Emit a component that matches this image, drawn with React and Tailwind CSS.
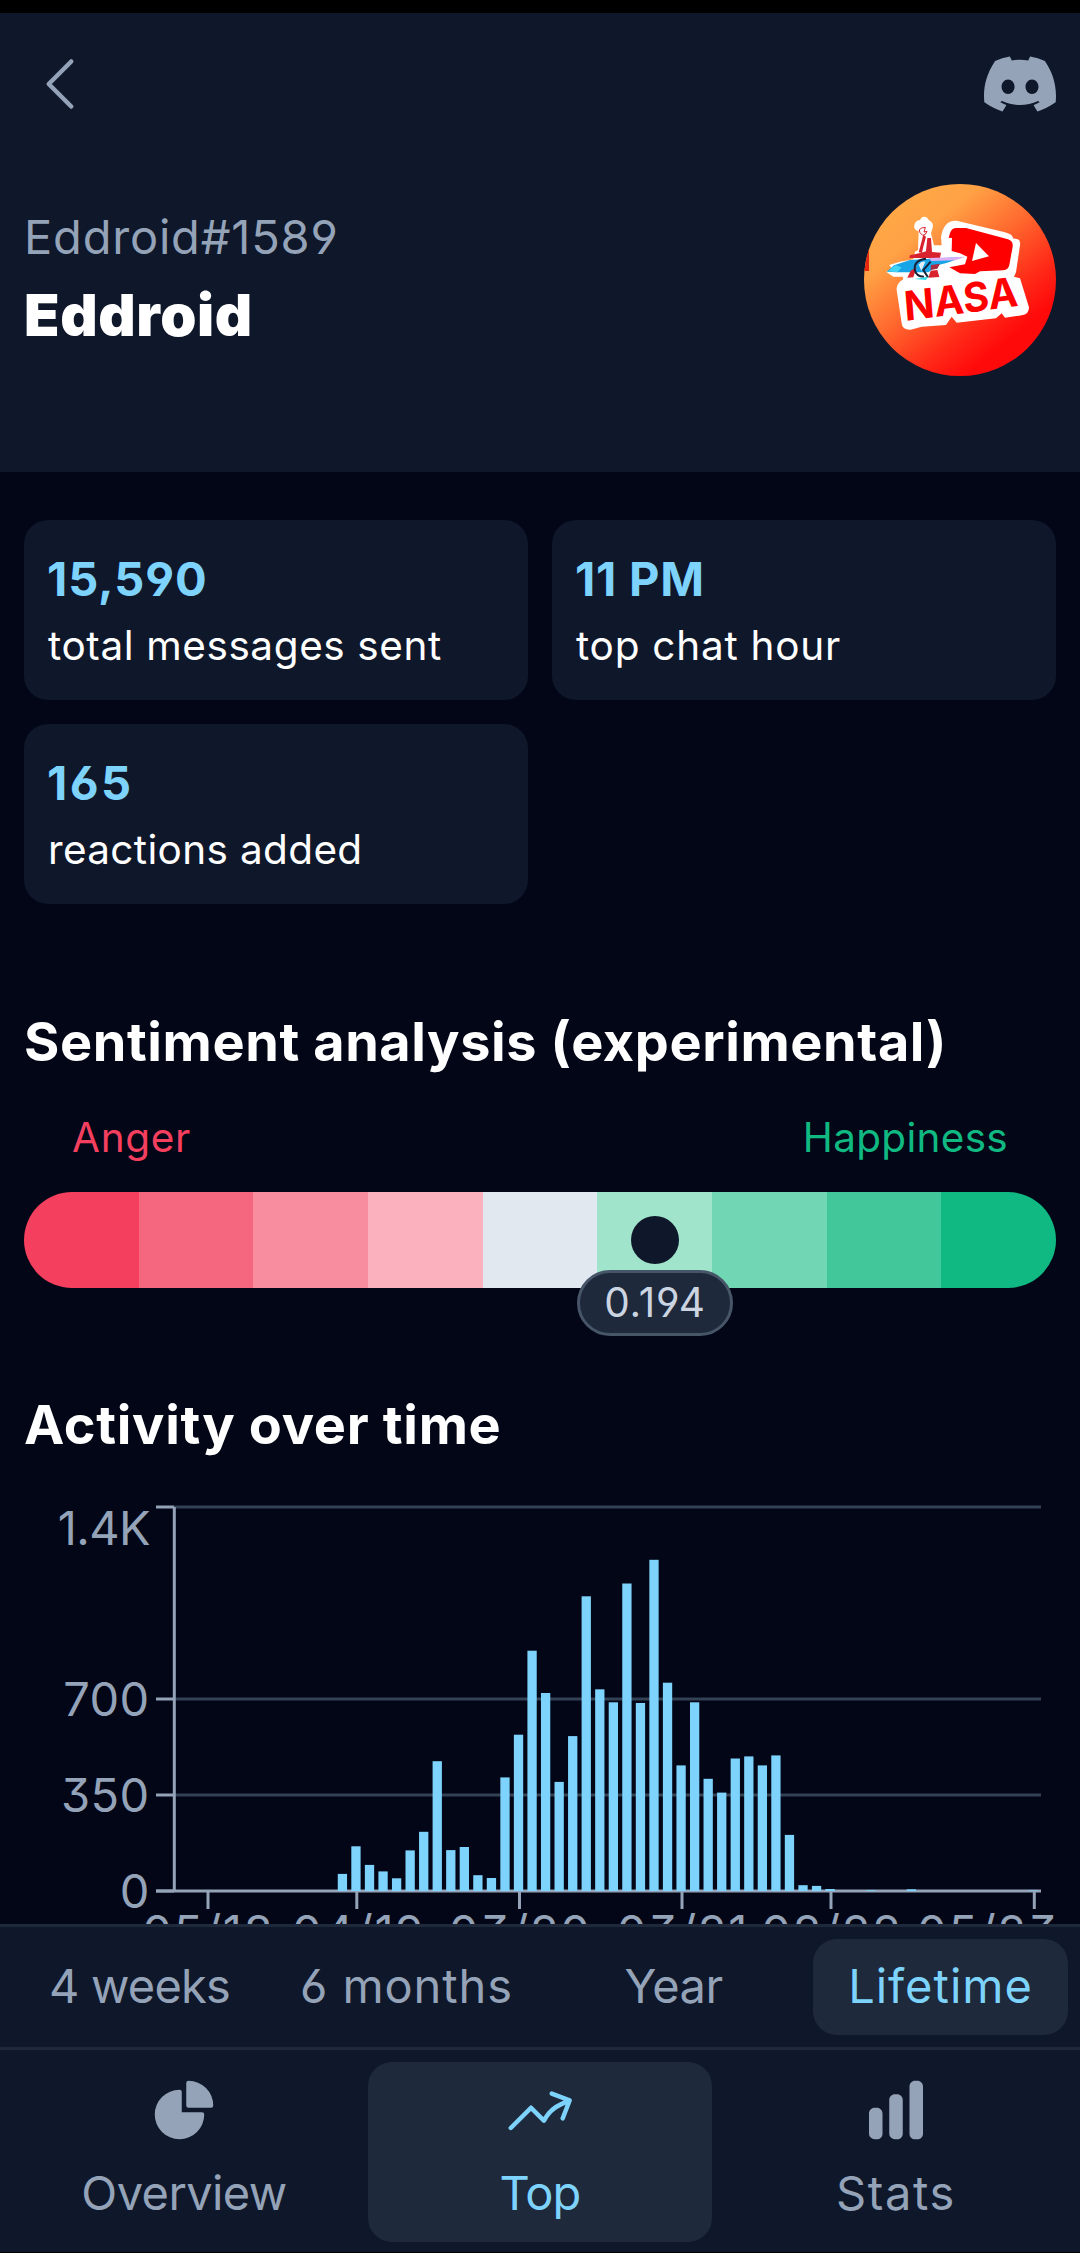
import React from "react";
import { SiDiscord } from "react-icons/si";
import {
  HiOutlineChevronLeft,
  HiChartPie,
  HiArrowTrendingUp,
  HiChartBar,
} from "react-icons/hi2";

const CARDS = [
  { value: "15,590", label: "total messages sent", v: "tracking-[0.9px]", l: "tracking-[0.6px]" },
  { value: "11 PM", label: "top chat hour", v: "tracking-[0.8px]", l: "tracking-[0.75px]" },
  { value: "165", label: "reactions added", v: "tracking-[2.4px]", l: "tracking-[0.35px]" },
];

const SEGMENTS = [
  "bg-[#f43f5e]",
  "bg-[#f5677f]",
  "bg-[#f98da0]",
  "bg-[#fbb2be]",
  "bg-[#e2e8f0]",
  "bg-[#a0e4cc]",
  "bg-[#70d6b3]",
  "bg-[#41c79a]",
  "bg-[#10b981]",
];

// Top edge of each monthly bar, keyed by its slot on the 64-month axis.
const FIRST_SLOT = 12;
const BASE = 1891;
const BAR_TOPS = [
  1873.9, 1846.3, 1864.9, 1871.4, 1878.3, 1850.4, 1831.8, 1761.2, 1850.1, 1847,
  1875.2, 1878, 1777.4, 1734.7, 1650.7, 1693, 1781.9, 1736.1, 1596.3, 1689.3,
  1702.3, 1583.5, 1703, 1559.8, 1682.7, 1765.4, 1702.3, 1778.8, 1792.6, 1758.5,
  1756.4, 1765.4, 1755.4, 1834.9, 1885.2, 1885.9, 1889, BASE, BASE, 1890.2, BASE,
  BASE, 1889.3, BASE, BASE, BASE, BASE, BASE, BASE, BASE, BASE, 1890.4,
];
const SLOT = 13.547;

const Y_LABELS = [
  { text: "1.4K", x: 150, y: 1545, tick: 1507, s: "tracking-[-0.6px]" },
  { text: "700", x: 149.5, y: 1715.7, tick: 1699, s: "tracking-[0.4px]" },
  { text: "350", x: 149.5, y: 1811.7, tick: 1795, s: "tracking-[0.4px]" },
  { text: "0", x: 149.5, y: 1907.7, tick: 1891, s: "tracking-normal" },
];

const X_LABELS = [
  { text: "05/18", x: 208.5, tick: 208 },
  { text: "04/19", x: 358.3, tick: 356.8 },
  { text: "03/20", x: 520.3, tick: 519.5 },
  { text: "03/21", x: 683, tick: 682 },
  { text: "02/22", x: 832, tick: 831 },
  { text: "05/23", x: 988, tick: 1034.3 },
];

const RANGES = [
  { text: "4 weeks", s: "tracking-[-0.8px]" },
  { text: "6 months", s: "tracking-[0.9px]" },
  { text: "Year", s: "tracking-[-0.5px]" },
  { text: "Lifetime", s: "tracking-[1px]", active: true },
];

const TABS = [
  { text: "Overview", s: "tracking-[-0.6px]", Icon: HiChartPie },
  { text: "Top", s: "tracking-[-0.9px]", Icon: HiArrowTrendingUp, active: true },
  { text: "Stats", s: "tracking-[1.6px]", Icon: HiChartBar },
];

function Avatar() {
  return (
    <svg className="size-48 rounded-full" viewBox="12 12 576 576">
      <defs>
        <linearGradient id="sky" x1="0.15" y1="0.14" x2="0.72" y2="0.84">
          <stop offset="0" stopColor="#ffa747" />
          <stop offset="0.2" stopColor="#ffa245" />
          <stop offset="0.5" stopColor="#ff6a2e" />
          <stop offset="0.8" stopColor="#ff2a18" />
          <stop offset="1" stopColor="#ff0a0a" />
        </linearGradient>
      </defs>
      <rect x="12" y="12" width="576" height="576" fill="url(#sky)" />
      <rect x="12" y="210" width="15" height="63" fill="#e8260f" />
      <g fill="#fff">
        <path d="M176 153 Q160 150 163 135 Q166 122 180 120 Q184 110 193 110 Q203 111 206 120 Q219 126 219 139 Q216 150 213 160 L222 196 L245 196 L243 172 Q250 120 290 122 L432 156 Q462 164 458 175 L474 178 Q482 182 480 196 L468 277 L462 290 L480 295 L507 382 Q507 404 485 406 L435 413 L425 400 L408 415 L290 428 L275 410 L258 435 L185 440 L152 449 Q126 450 125 430 L110 330 Q108 310 130 298 L128 290 L100 290 L78 275 L98 270 L88 255 L120 245 L160 238 L165 215 L174 210 Z" />
      </g>
      <path d="M270 160 Q274 144 290 144 L318 144 L444 178 Q460 183 458 200 L448 255 Q445 270 430 271 L360 274 L345 282 L300 280 L268 262 L315 253 L322 230 L300 220 L275 213 L276 174 L266 173 Z" fill="#ff0000" />
      <path d="M348 189 L387 229 L336 243 Z" fill="#fff" />
      <path d="M178 150 L184 144 L196 142 L192 156 L201 154 L196 163 L188 166 L180 158 Z" fill="none" stroke="#d8232f" strokeWidth="3" />
      <path d="M190 164 L198 170 L190 200 L186 218 L176 217 Z M202 174 L213 174 L216 216 L243 218 L240 234 L148 234 L150 226 L184 218 L198 214 Z" fill="#d8232f" />
      <path d="M80 275 L102 256 L150 240 L300 231 Q285 244 238 254 L205 277 L110 277 Z" fill="#18a5e8" />
      <path d="M84 274 L106 256 L125 262 L112 277 Z" fill="#43d4f5" />
      <path d="M205 234 L318 230 L285 241 L215 243 Z" fill="#dcb0f4" />
      <path d="M152 272 L170 262 L160 292 L142 293 Z M212 272 L232 270 L238 291 L205 293 Z" fill="#d8232f" />
      <path d="M198 236 Q162 240 164 268 Q168 290 192 290 M212 245 L190 270 L204 292" fill="none" stroke="#17223a" strokeWidth="6" />
      <path d="M176 254 Q184 242 196 245 L184 272 Z" fill="#e4eef8" />
      <path d="M213 255 L240 251 L232 266 L212 270 Z" fill="#a92c40" />
      <path d="M163 297 L205 290 L198 300 Z" fill="#35d9e8" />
      <text
        x="0"
        y="0"
        transform="translate(136 423) rotate(-7.6) skewX(-3)"
        textLength="344"
        lengthAdjust="spacingAndGlyphs"
        className="fill-[#ff0000] font-['Inter',sans-serif] text-[122px] font-bold"
      >
        NASA
      </text>
    </svg>
  );
}

function ActivityChart() {
  return (
    <svg className="mt-[19px] block h-[444px] w-[1080px] shrink-0" viewBox="0 1480 1080 444">
      <g stroke="#334155" strokeWidth="3">
        <path d="M174 1507H1041M174 1699H1041M174 1795H1041" />
      </g>
      <g stroke="#94a3b8" strokeWidth="3" fill="none">
        <path d="M174.3 1507V1891M156 1891H1041" />
        {Y_LABELS.map((l) => (
          <path key={l.text} d={`M156 ${l.tick}H174`} />
        ))}
        {X_LABELS.map((l) => (
          <path key={l.text} d={`M${l.tick} 1891V1909`} />
        ))}
      </g>
      <g fill="#7dd3fc">
        {BAR_TOPS.map((top, i) => (
          <rect key={i} x={175.2 + (FIRST_SLOT + i) * SLOT} y={top} width="9.3" height={BASE - top} />
        ))}
      </g>
      <g className="fill-[#94a3b8] text-[47px]">
        {Y_LABELS.map((l) => (
          <text key={l.text} x={l.x} y={l.y} textAnchor="end" className={l.s}>
            {l.text}
          </text>
        ))}
        {X_LABELS.map((l) => (
          <text key={l.text} x={l.x} y="1949" textAnchor="middle" className="tracking-[1.8px]">
            {l.text}
          </text>
        ))}
      </g>
    </svg>
  );
}

export default function App() {
  return (
    <div className="flex h-[2253px] w-[1080px] flex-col overflow-hidden bg-[#020617] font-['Inter',sans-serif] text-white [font-feature-settings:'cv03','cv04','cv09']">
      <div className="h-[13px] shrink-0 bg-black" />

      <header className="h-[459px] shrink-0 bg-[#0f172a] px-6 pt-[35px]">
        <div className="flex items-center justify-between text-[#94a3b8]">
          <HiOutlineChevronLeft className="size-[72px]" />
          <SiDiscord className="size-[72px]" />
        </div>
        <div className="mt-16 flex justify-between">
          <div className="pt-[17px]">
            <div className="text-[47px] leading-[72px] tracking-[0.8px] text-[#94a3b8]">Eddroid#1589</div>
            <h1 className="text-[58px] leading-[84px] font-black tracking-[0.6px]">Eddroid</h1>
          </div>
          <Avatar />
        </div>
      </header>

      <main className="flex min-h-0 flex-1 flex-col overflow-hidden">
        <div className="mx-6 mt-12 grid shrink-0 grid-cols-2 gap-6">
          {CARDS.map((c) => (
            <div key={c.label} className="h-[180px] rounded-3xl bg-[#0f172a] p-6">
              <div className={`-ml-px text-[47px] leading-[70px] font-bold text-[#7dd3fc] ${c.v}`}>{c.value}</div>
              <div className={`text-[40.5px] leading-[64px] ${c.l}`}>{c.label}</div>
            </div>
          ))}
        </div>

        <h2 className="mx-6 mt-[102px] shrink-0 text-[54px] leading-[72px] font-bold tracking-[0.6px] whitespace-nowrap">
          Sentiment analysis (experimental)
        </h2>
        <div className="mx-[72px] mt-[30px] flex shrink-0 justify-between text-[40.5px] leading-[60px]">
          <span className="tracking-[0.7px] text-[#f43f5e]">Anger</span>
          <span className="tracking-[0.3px] text-[#10b981]">Happiness</span>
        </div>
        <div className="relative mx-6 mt-6 h-24 shrink-0">
          <div className="grid h-full grid-cols-9 overflow-hidden rounded-full">
            {SEGMENTS.map((s) => (
              <div key={s} className={s} />
            ))}
          </div>
          <div className="absolute top-6 left-[607px] size-12 rounded-full bg-[#0f172a]" />
          <div className="absolute top-[78px] left-[553px] flex h-[66px] w-[156px] items-center justify-center rounded-full border-[3px] border-[#475569] bg-[#1e293b] text-[40.5px] leading-[60px] tracking-[0.9px] text-[#cbd5e1]">
            0.194
          </div>
        </div>

        <h2 className="mx-6 mt-[101px] shrink-0 text-[54px] leading-[72px] font-bold tracking-[0.7px]">Activity over time</h2>
        <ActivityChart />
      </main>

      <div className="grid shrink-0 grid-cols-4 gap-3 border-t-[3px] border-[#1e293b] bg-[#0f172a] p-3">
        {RANGES.map((r) => (
          <div
            key={r.text}
            className={`h-24 rounded-3xl text-center text-[47px] leading-[94px] whitespace-nowrap ${r.s} ${
              r.active ? "bg-[#1e293b] text-[#7dd3fc]" : "text-[#94a3b8]"
            }`}
          >
            {r.text}
          </div>
        ))}
      </div>

      <nav className="grid shrink-0 grid-cols-3 gap-3 border-t-[3px] border-[#1e293b] bg-[#0f172a] px-3 pt-3 pb-2.5">
        {TABS.map(({ text, s, Icon, active }) => (
          <div
            key={text}
            className={`flex h-[180px] flex-col items-center rounded-3xl pt-3 ${
              active ? "bg-[#1e293b] text-[#7dd3fc]" : "text-[#94a3b8]"
            }`}
          >
            <Icon className="size-[72px]" />
            <span className={`text-[47px] leading-[93px] ${s}`}>{text}</span>
          </div>
        ))}
      </nav>
      <div className="h-px shrink-0 bg-black" />
    </div>
  );
}
